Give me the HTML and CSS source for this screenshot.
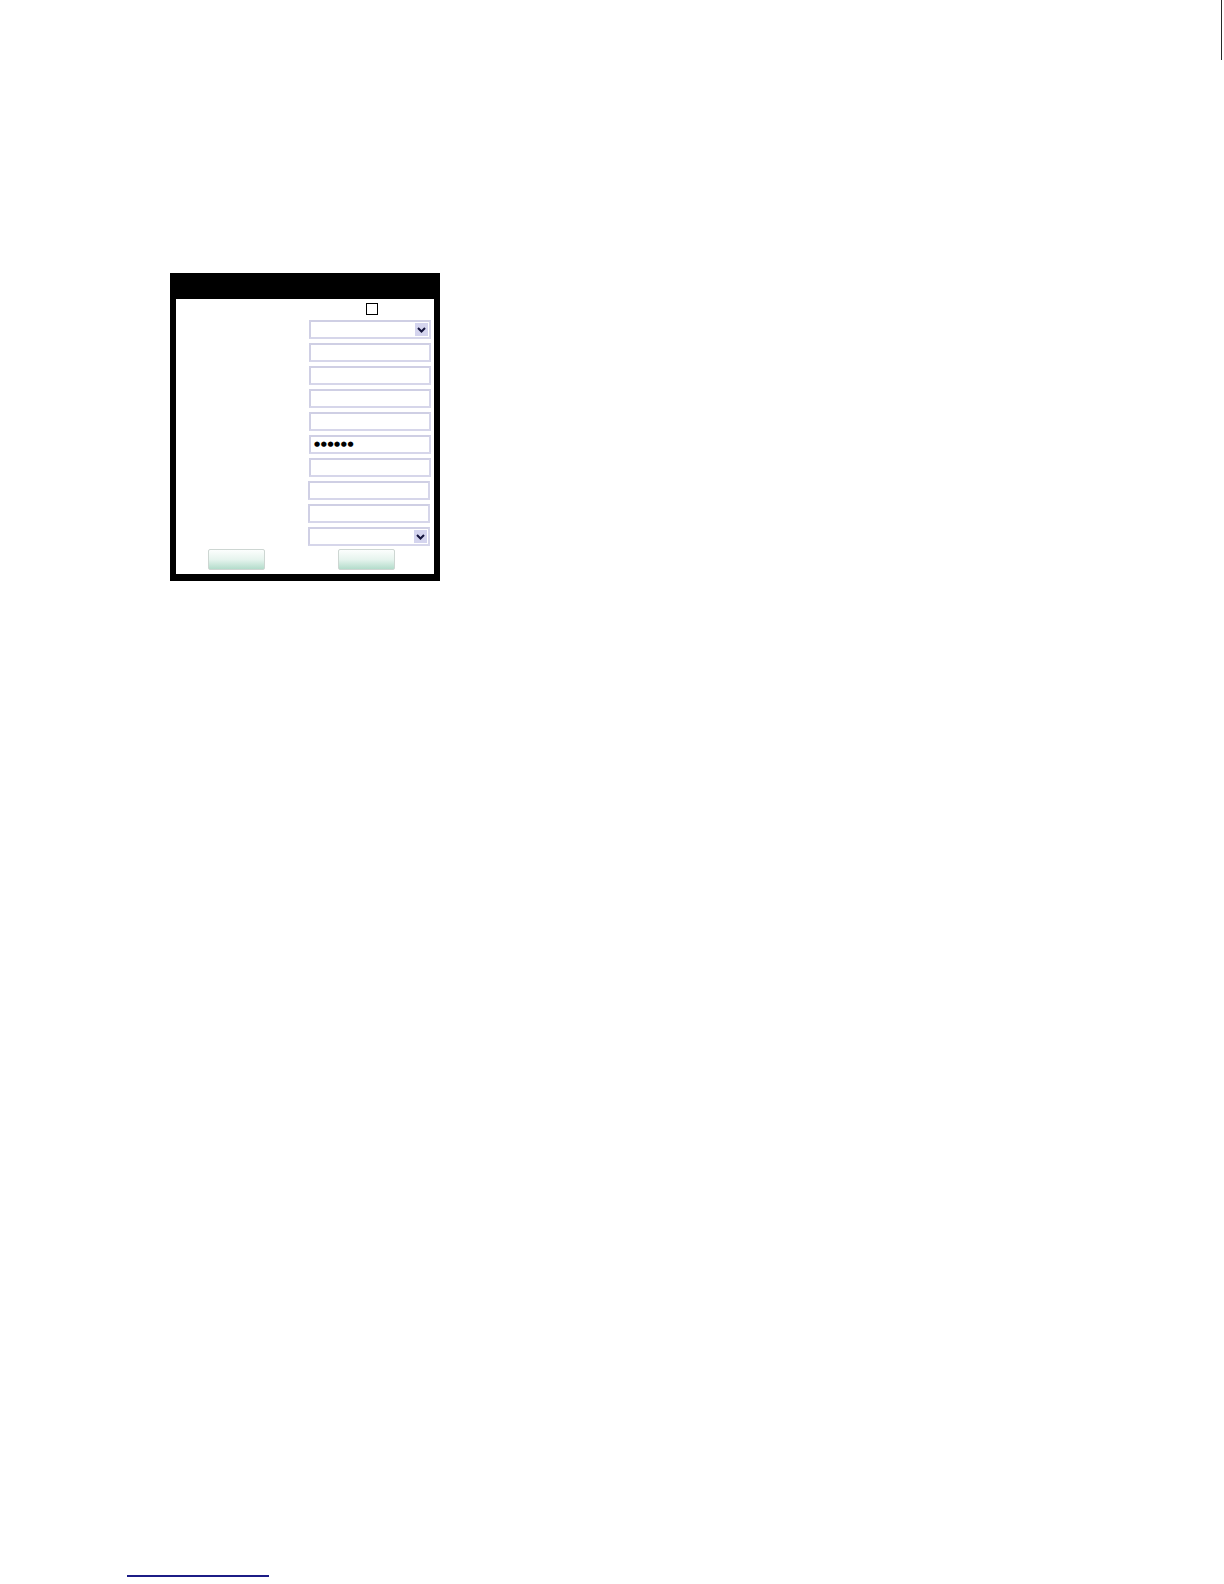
FILE: index.html
```html
<!DOCTYPE html>
<html lang="en">
<head>
<meta charset="utf-8">
<title>Form</title>
<link rel="stylesheet" href="styles.css">
</head>
<body>
<div class="page">
  <div class="edge"><div class="edge-line"></div></div>
  <div class="frame">
    <div class="panel">
      <div class="row row-check"><span class="checkbox"></span></div>
      <div class="row row-top"><div class="field select"><span class="arrow"><svg width="9" height="6" viewBox="0 0 9 6"><path d="M1 1 L4.5 4.5 L8 1" fill="none" stroke="#14143c" stroke-width="2"/></svg></span></div></div>
      <div class="row row-top"><div class="field"></div></div>
      <div class="row row-top"><div class="field"></div></div>
      <div class="row row-top"><div class="field"></div></div>
      <div class="row row-top"><div class="field"></div></div>
      <div class="row row-top"><div class="field password"><span class="dots">●●●●●●</span></div></div>
      <div class="row row-top"><div class="field"></div></div>
      <div class="row"><div class="field"></div></div>
      <div class="row"><div class="field"></div></div>
      <div class="row"><div class="field select"><span class="arrow"><svg width="9" height="6" viewBox="0 0 9 6"><path d="M1 1 L4.5 4.5 L8 1" fill="none" stroke="#14143c" stroke-width="2"/></svg></span></div></div>
      <div class="buttons">
        <span class="btn btn-left"></span>
        <span class="btn btn-right"></span>
      </div>
    </div>
  </div>
  <div class="footer-line"></div>
</div>
</body>
</html>
```

FILE: styles.css
```css
html, body {
  margin: 0;
  padding: 0;
  background: #ffffff;
  font-family: "Liberation Sans", Arial, sans-serif;
}

.page {
  width: 1224px;
  height: 1584px;
  display: flex;
  flex-direction: column;
  overflow: hidden;
}

.edge {
  display: flex;
  justify-content: flex-end;
  height: 60px;
  padding-right: 2px;
}

.edge-line {
  width: 1px;
  height: 60px;
  background: #2a2a2a;
}

.frame {
  box-sizing: border-box;
  margin-top: 213px;
  margin-left: 170px;
  width: 270px;
  height: 308px;
  background: #000000;
  padding: 26px 6px 7px 6px;
}

.panel {
  box-sizing: border-box;
  height: 100%;
  background: #ffffff;
  padding: 4px 4px 4px 0;
  display: flex;
  flex-direction: column;
  gap: 4px;
}

.row {
  display: flex;
  justify-content: flex-end;
  height: 19px;
}

.row-top {
  padding-right: 0;
  margin-right: -1px;
}

.row-check {
  height: 13px;
  padding-right: 52px;
}

.checkbox {
  box-sizing: border-box;
  width: 12px;
  height: 12px;
  border: 1px solid #000000;
  background: #ffffff;
}

.field {
  box-sizing: border-box;
  width: 122px;
  height: 19px;
  border: 2px solid #d6d6ea;
  border-top-color: #cfcfe4;
  border-left-color: #d0d0e5;
  background: #ffffff;
  display: flex;
  align-items: center;
}

.select {
  justify-content: flex-end;
  padding-right: 1px;
}

.arrow {
  width: 13px;
  height: 13px;
  background: #d4d4ee;
  display: flex;
  align-items: center;
  justify-content: center;
}

.arrow svg {
  display: block;
}

.password {
  padding-left: 3px;
}

.dots {
  font-family: "DejaVu Sans", sans-serif;
  font-size: 7px;
  letter-spacing: 0.6px;
  color: #000000;
  line-height: 1;
}

.buttons {
  display: flex;
  height: 21px;
  margin-top: -1px;
  padding-left: 32px;
  gap: 73px;
}

.btn {
  box-sizing: border-box;
  width: 57px;
  height: 21px;
  border: 1px solid #cdd6d2;
  border-radius: 2px;
  background: linear-gradient(to bottom, #fcfefd 0%, #e6f4ee 50%, #b3dccb 100%);
}

.footer-line {
  margin-top: 994px;
  margin-left: 127px;
  width: 142px;
  height: 2px;
  background: #1c1c86;
}
```
